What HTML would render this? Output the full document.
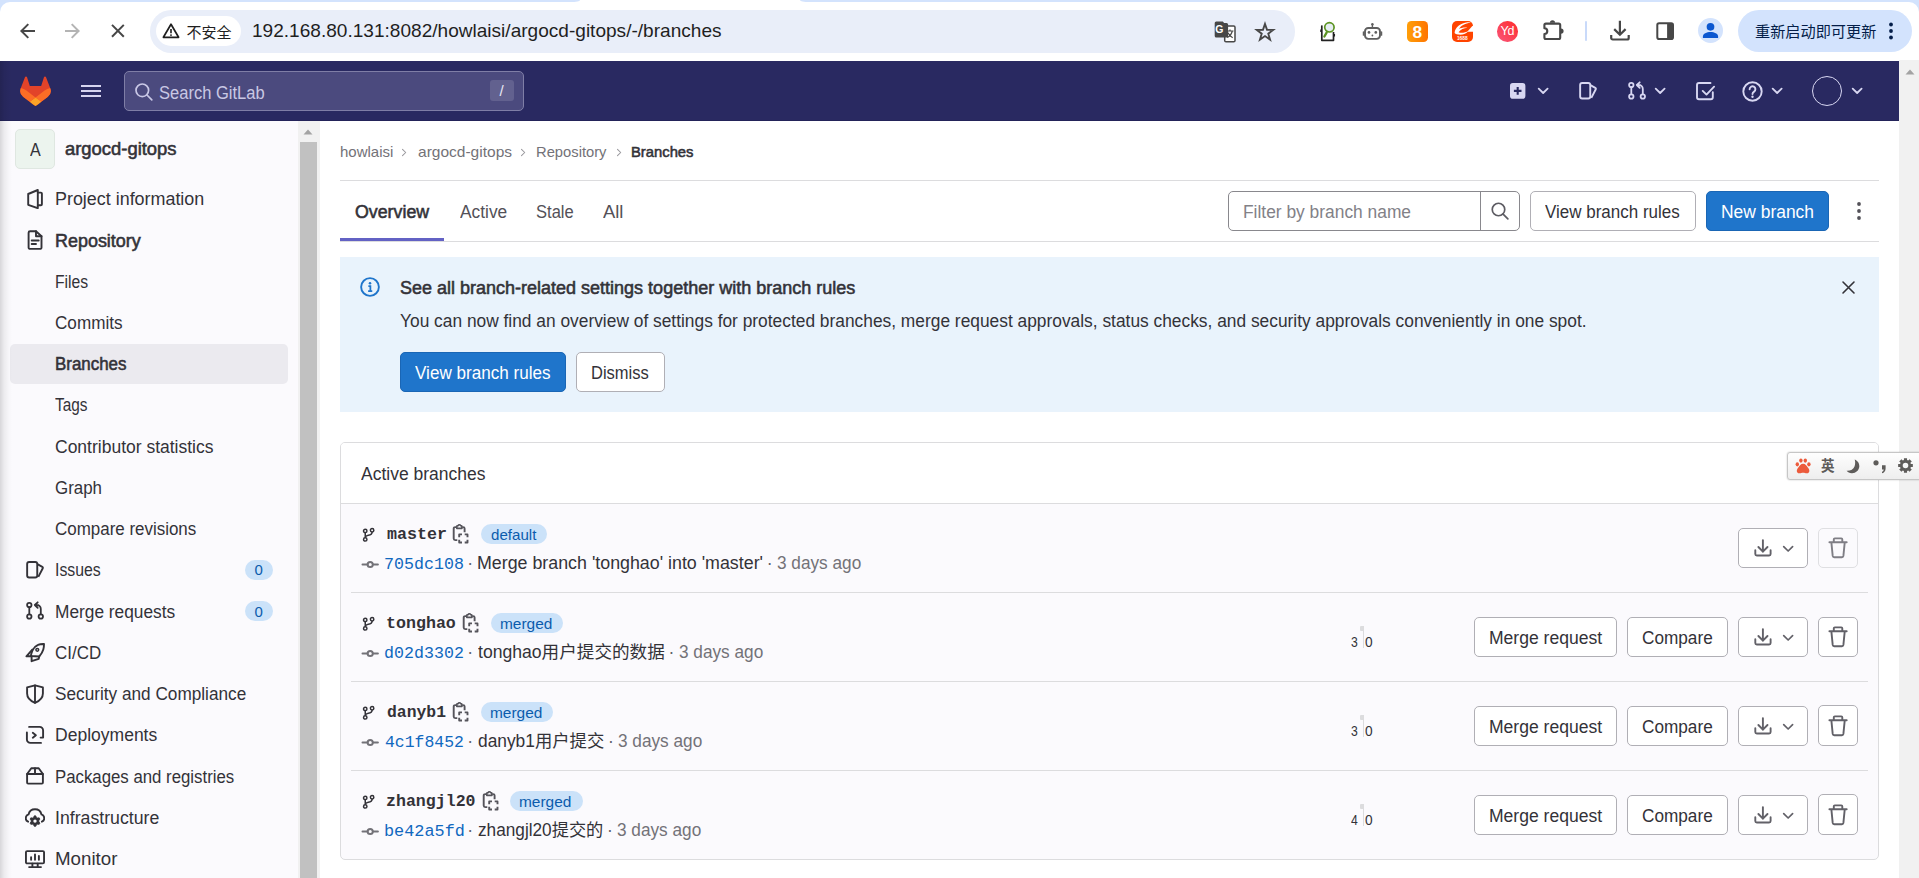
<!DOCTYPE html>
<html lang="en"><head><meta charset="utf-8"><title>Branches · howlaisi / argocd-gitops · GitLab</title>
<style>
html,body{margin:0;padding:0;}
body{width:1919px;height:878px;overflow:hidden;position:relative;background:#fff;font-family:'Liberation Sans','Noto Sans CJK SC',sans-serif;}
.b{position:absolute;box-sizing:border-box;display:block;}
.t{position:absolute;white-space:nowrap;line-height:24px;height:24px;transform-origin:0 50%;}
</style></head><body>
<header class="browser-toolbar">
<div class="b" style="left:0px;top:0px;width:1919px;height:61px;background:#d3e3fd;"></div>
<div class="b" style="left:0px;top:2px;width:1919px;height:59px;background:#fff;border-radius:10px 10px 0 0;"></div>
<div class="b" style="left:580px;top:0px;width:220px;height:6px;background:#fff;"></div>
<svg class="b" style="left:570px;top:0px;" width="10" height="2" viewBox="0 0 10 2"><path d="M0 2 Q10 2 10 0 L10 2 Z" fill="#fff"/></svg>
<svg class="b" style="left:800px;top:0px;" width="10" height="2" viewBox="0 0 10 2"><path d="M10 2 Q0 2 0 0 L0 2 Z" fill="#fff"/></svg>
<svg class="b" style="left:18px;top:20.5px;" width="20" height="20" viewBox="0 0 20 20"><path d="M17 10H3.500M10.300 3.100L3.400 10l6.900 6.900" fill="none" stroke="#474747" stroke-width="2"/></svg>
<svg class="b" style="left:62px;top:20.5px;" width="20" height="20" viewBox="0 0 20 20"><path d="M3 10h13.500M9.700 3.100L16.600 10l-6.900 6.900" fill="none" stroke="#b4b4b4" stroke-width="2"/></svg>
<svg class="b" style="left:107.5px;top:21px;" width="20" height="20" viewBox="0 0 20 20"><path d="M4 3.900l11.800 11.800M15.800 3.900L4 15.700" fill="none" stroke="#474747" stroke-width="2"/></svg>
<div class="b" style="left:150px;top:10px;width:1144.5px;height:42.5px;background:#e9eef9;border-radius:21.25px;"></div>
<div class="b" style="left:156px;top:16px;width:84.8px;height:30px;background:#fff;border-radius:15px;"></div>
<svg class="b" style="left:162px;top:22px;" width="18" height="17" viewBox="0 0 18 17"><path d="M9 2.200L16.600 15.300H1.400Z" fill="none" stroke="#1f1f1f" stroke-width="1.700" stroke-linejoin="round"/><path d="M9 7v4.200" stroke="#1f1f1f" stroke-width="1.600"/><circle cx="9" cy="13.100" r="0.950" fill="#1f1f1f"/></svg>
<span class="t" style="left:186.40px;top:20.60px;font-size:15px;color:#1f1f1f;transform:scaleX(1.0000);">不安全</span>
<span class="t" style="left:251.50px;top:19.30px;font-size:19px;color:#1f1f1f;transform:scaleX(1.0034);">192.168.80.131:8082/howlaisi/argocd-gitops/-/branches</span>
<svg class="b" style="left:1214px;top:21px;" width="22" height="22" viewBox="0 0 22 22"><path d="M2.300 0.500h6.500l1.300 1.500h2.400a1.600 1.600 0 0 1 1.600 1.600v11.300a1.600 1.600 0 0 1-1.600 1.600H2.300a1.600 1.600 0 0 1-1.600-1.600V2.100A1.600 1.600 0 0 1 2.300.500z" fill="#474747"/>
<rect x="10.700" y="5" width="10.300" height="15.700" rx="1.300" fill="#fff" stroke="#474747" stroke-width="1.500"/>
<path d="M10 5h4.100v11.500H10z" fill="#474747"/>
<text x="1.300" y="12.300" font-size="10.500" font-weight="700" fill="#fff" font-family="Liberation Sans,sans-serif">G</text>
<path d="M12.500 10h7M16 8.600V10M18.300 10c-.600 2.800-2.300 5-5 6.600M14 11.700c.800 2 2.400 3.800 4.700 5" fill="none" stroke="#474747" stroke-width="1.200"/></svg>
<svg class="b" style="left:1254px;top:20.5px;" width="22" height="22" viewBox="0 0 22 22"><path d="M11.00 3.00 L13.03 8.81 L19.18 8.94 L14.28 12.67 L16.05 18.56 L11.00 15.05 L5.95 18.56 L7.72 12.67 L2.82 8.94 L8.97 8.81Z" fill="none" stroke="#474747" stroke-width="1.900" stroke-linejoin="miter"/></svg>
<svg class="b" style="left:1319px;top:20px;" width="18" height="22" viewBox="0 0 18 22"><path d="M3.500 6H2.800v14.300H14.500V12" fill="none" stroke="#222" stroke-width="1.700" stroke-linejoin="round"/>
<path d="M1.800 9.500v2.500M15.500 14v2.500" stroke="#222" stroke-width="1.100"/>
<circle cx="10.400" cy="7.300" r="4.700" fill="#e6edf3" stroke="#5c9422" stroke-width="1.700"/>
<path d="M7.600 12.600L5.400 16.500" stroke="#5c9422" stroke-width="2.300" stroke-linecap="round"/></svg>
<svg class="b" style="left:1362px;top:22px;" width="21" height="19" viewBox="0 0 21 19"><rect x="3" y="6" width="15" height="10.900" rx="3.300" fill="none" stroke="#5f5f5f" stroke-width="1.900"/>
<path d="M1.400 10v3.200M19.600 10v3.200" stroke="#5f5f5f" stroke-width="1.300" stroke-linecap="round"/>
<path d="M10.400 5.500V2.500" stroke="#5f5f5f" stroke-width="1.400"/><circle cx="10.400" cy="2.200" r="1.250" fill="#5f5f5f"/>
<circle cx="7" cy="10.400" r="1.350" fill="#5f5f5f"/><circle cx="13.800" cy="10.400" r="1.350" fill="#5f5f5f"/><circle cx="10.400" cy="13.500" r=".900" fill="#5f5f5f"/></svg>
<div class="b" style="left:1407px;top:21px;width:20.700px;height:20.900px;border-radius:4.500px;background:linear-gradient(90deg,#ff9f0a,#ff7500);color:#fff;font:700 17.300px/22.600px 'Liberation Sans',sans-serif;text-align:center;">8</div>
<div class="b" style="left:1452.300px;top:21px;width:20.500px;height:20.500px;border-radius:5px;background:#ff4400;"></div>
<svg class="b" style="left:1452.3px;top:21px;" width="24" height="20.5" viewBox="0 0 24 20.5"><path d="M2.600 11.800C3 6.500 8.500 2 15.500 1.300c1.600-.100 2.600.200 3.300.800-4.500-.300-9.800 2.300-11.800 6 2-1.200 5.500-1.800 8.300-1.300-3.500.300-6.800 1.800-8.800 4.400 2.500 1.200 6.800.700 10-1.500-1.800 3-6.500 4.600-10.300 3.900-2.300-.400-3.700-1.200-3.600-1.800z" fill="#fff"/>
<path d="M15.300 10.800L20.300 5h.800v5.800z" fill="#fff"/>
<text x="10.250" y="18.700" font-size="4.800" font-weight="700" fill="#fff" text-anchor="middle" font-family="Liberation Sans,sans-serif">1688</text></svg>
<div class="b" style="left:1497px;top:21px;width:20.700px;height:20.700px;border-radius:50%;background:linear-gradient(225deg,#ff2a2a,#f9587c);color:#fff;font:400 12.500px/20.500px 'Liberation Sans',sans-serif;letter-spacing:-1.300px;text-align:center;text-indent:-1px;">Yd</div>
<svg class="b" style="left:1540px;top:19px;" width="26" height="23" viewBox="0 0 26 23"><path d="M5.900 4.600H18.700a1.500 1.500 0 0 1 1.500 1.500V18.500a1.500 1.500 0 0 1-1.500 1.500H5.900a1.500 1.500 0 0 1-1.500-1.500V15a2.900 2.900 0 0 0 0-5.800V6.100a1.500 1.500 0 0 1 1.500-1.500z" fill="none" stroke="#474747" stroke-width="2.100" stroke-linejoin="round"/>
<path d="M9.900 3.800a2.600 2.600 0 0 1 5.200 0zM21 9.500a2.600 2.600 0 0 1 0 5.200z" fill="#474747"/></svg>
<div class="b" style="left:1585px;top:21px;width:2.3px;height:19.5px;background:#c9dafa;border-radius:1px;"></div>
<svg class="b" style="left:1608px;top:19px;" width="24" height="23" viewBox="0 0 24 23"><path d="M11.900 1.700v13.500M6.200 10.100l5.700 5.700 5.700-5.700M3.200 16v3a1.500 1.500 0 0 0 1.500 1.500h14.500a1.500 1.500 0 0 0 1.500-1.500V16" fill="none" stroke="#474747" stroke-width="2.200"/></svg>
<svg class="b" style="left:1655px;top:21px;" width="20" height="20" viewBox="0 0 20 20"><rect x="2.300" y="2.200" width="15.700" height="15.900" rx="1.800" fill="none" stroke="#474747" stroke-width="2"/><path d="M12.100 2.200H17a1 1 0 0 1 1 1v14a1 1 0 0 1-1 1h-4.900z" fill="#474747"/></svg>
<div class="b" style="left:1698px;top:17.8px;width:25.3px;height:25.3px;background:#d3e3fd;border-radius:12.65px;"></div>
<svg class="b" style="left:1698px;top:17.8px;" width="25.3" height="25.3" viewBox="0 0 25.3 25.3"><circle cx="12.500" cy="8.800" r="3.850" fill="#0b57d0"/><path d="M4.900 19.900v-1.300c0-3.200 3.800-4.700 7.600-4.700s7.600 1.500 7.600 4.700v1.300z" fill="#0b57d0"/></svg>
<div class="b" style="left:1737.7px;top:10px;width:174.5px;height:42px;background:#d3e3fd;border-radius:21px;"></div>
<span class="t" style="left:1755.30px;top:20.00px;font-size:15px;color:#041e49;transform:scaleX(1.0108);">重新启动即可更新</span>
<svg class="b" style="left:1887.2px;top:21px;" width="8" height="20" viewBox="0 0 8 20"><circle cx="4" cy="3.500" r="1.900" fill="#041e49"/><circle cx="4" cy="10" r="1.900" fill="#041e49"/><circle cx="4" cy="16.500" r="1.900" fill="#041e49"/></svg>
</header>
<nav class="navbar-gitlab">
<div class="b" style="left:0px;top:60.75px;width:1899px;height:60px;background:#292961;"></div>
<div class="b" style="left:0px;top:119.9px;width:1899px;height:0.85px;background:#232359;"></div>
<div class="b" style="left:1899.4px;top:60.4px;width:20px;height:818px;background:#f1f1f1;"></div>
<svg class="b" style="left:1904.6px;top:69.4px;" width="10" height="6" viewBox="0 0 10 6"><path d="M5 0.500L9.500 5.500H0.500Z" fill="#a3a3a3"/></svg>
<svg class="b" style="left:20px;top:76px;" width="31" height="29.5" viewBox="0 0 32 31"><path d="M31.460 12.780l-.040-.120-4.350-11.350a1.140 1.140 0 0 0-.450-.540 1.170 1.170 0 0 0-1.340.070 1.170 1.170 0 0 0-.390.590l-2.940 9h-11.900l-2.940-9a1.140 1.140 0 0 0-.390-.590 1.170 1.170 0 0 0-1.340-.070 1.150 1.150 0 0 0-.450.540L.580 12.660l-.04.110a8.080 8.080 0 0 0 2.680 9.340l.01.010.04.030 6.630 4.960 3.280 2.480 2 1.510a1.340 1.340 0 0 0 1.620 0l2-1.510 3.280-2.480 6.670-5 .020-.010a8.090 8.090 0 0 0 2.690-9.320z" fill="#e24329"/>
<path d="M31.460 12.780l-.040-.120a14.700 14.700 0 0 0-5.850 2.630l-9.570 7.240 6.090 4.600 6.670-5 .020-.010a8.090 8.090 0 0 0 2.680-9.340z" fill="#fc6d26"/>
<path d="M9.900 27.130l3.280 2.480 2 1.510a1.340 1.340 0 0 0 1.620 0l2-1.510 3.280-2.480-6.080-4.600z" fill="#fca326"/>
<path d="M6.430 15.290a14.700 14.700 0 0 0-5.850-2.630l-.04.110a8.080 8.080 0 0 0 2.680 9.340l.01.010.04.030 6.630 4.960 6.100-4.580z" fill="#fc6d26"/></svg>
<div class="b" style="left:81px;top:84.6px;width:20px;height:2px;background:#d6d4ef;"></div>
<div class="b" style="left:81px;top:90.2px;width:20px;height:2px;background:#d6d4ef;"></div>
<div class="b" style="left:81px;top:95.3px;width:20px;height:2px;background:#d6d4ef;"></div>
<div class="b" style="left:124px;top:71px;width:399.5px;height:39.5px;background:#4b4a7e;border:1px solid #7f7ea6;border-radius:5px;"></div>
<svg class="b" style="left:134px;top:81.5px;" width="20" height="20" viewBox="0 0 20 20"><circle cx="8.300" cy="8.300" r="6.300" fill="none" stroke="#c9c8e6" stroke-width="1.700"/><path d="M13 13L17.800 17.800" stroke="#c9c8e6" stroke-width="1.700" stroke-linecap="round"/></svg>
<span class="t" style="left:159.00px;top:81.30px;font-size:17.5px;color:#c9c8e4;transform:scaleX(0.9448);">Search GitLab</span>
<div class="b" style="left:490px;top:80px;width:23.75px;height:20.75px;background:#62618f;border-radius:3px;"></div>
<span class="t" style="left:499.50px;top:78.50px;font-size:15px;color:#e8e7f5;">/</span>
<svg class="b" style="left:1510.3px;top:83.1px;" width="15.4" height="15.7" viewBox="0 0 15.4 15.7"><rect x="0" y="0" width="15.400" height="15.700" rx="2.800" fill="#d8d7f2"/><path d="M7.700 4v7.700M3.900 7.850h7.600" stroke="#292961" stroke-width="2.100"/></svg>
<svg class="b" style="left:1536.8px;top:87.1px;" width="12.3" height="8" viewBox="0 0 12.3 8"><path d="M1.700 1.700L6.150 6l4.450-4.300" fill="none" stroke="#d8d7f2" stroke-width="1.8" stroke-linecap="round" stroke-linejoin="round"/></svg>
<svg class="b" style="left:1577.8px;top:81px;" width="20" height="20" viewBox="0 0 20 20"><rect x="2.150" y="2.050" width="10.100" height="15.400" rx="2" fill="none" stroke="#d8d7f2" stroke-width="1.9"/><path d="M12.400 4.200L17.300 6.800a1.100 1.100 0 0 1 .500 1.400L13.300 16.900" fill="none" stroke="#d8d7f2" stroke-width="1.9" stroke-linejoin="round"/></svg>
<svg class="b" style="left:1627px;top:81.1px;" width="20" height="20" viewBox="0 0 20 20"><circle cx="4.300" cy="4" r="2.200" fill="none" stroke="#d8d7f2" stroke-width="1.8"/><circle cx="4.300" cy="15.500" r="2.200" fill="none" stroke="#d8d7f2" stroke-width="1.8"/><circle cx="15.800" cy="15.500" r="2.200" fill="none" stroke="#d8d7f2" stroke-width="1.8"/><path d="M4.300 6.200v7.100M15.800 13.300V8a4 4 0 0 0-4-4H10M12.700 1.300L9.800 4l2.900 2.900" fill="none" stroke="#d8d7f2" stroke-width="1.8" stroke-linejoin="round" stroke-linecap="round"/></svg>
<svg class="b" style="left:1653.5px;top:87.1px;" width="12.3" height="8" viewBox="0 0 12.3 8"><path d="M1.700 1.700L6.150 6l4.450-4.300" fill="none" stroke="#d8d7f2" stroke-width="1.8" stroke-linecap="round" stroke-linejoin="round"/></svg>
<svg class="b" style="left:1695px;top:81px;" width="21" height="20" viewBox="0 0 21 20"><path d="M17.800 11.300v5a2 2 0 0 1-2 2H4a2 2 0 0 1-2-2V4a2 2 0 0 1 2-2h11.500" fill="none" stroke="#d8d7f2" stroke-width="1.900" stroke-linecap="round"/><path d="M7.700 9.900l3.800 3.700 7.600-7.900" fill="none" stroke="#d8d7f2" stroke-width="1.900" stroke-linecap="round" stroke-linejoin="round"/></svg>
<svg class="b" style="left:1741.5px;top:80.5px;" width="21" height="21" viewBox="0 0 21 21"><circle cx="10.500" cy="10.500" r="9.200" fill="none" stroke="#d8d7f2" stroke-width="1.900"/><path d="M7.600 8.200a2.900 2.900 0 1 1 4.500 2.400c-1 .700-1.600 1.300-1.600 2.400" fill="none" stroke="#d8d7f2" stroke-width="1.900" stroke-linecap="round"/><circle cx="10.500" cy="15.700" r="1.200" fill="#d8d7f2"/></svg>
<svg class="b" style="left:1770.8px;top:87.3px;" width="12.3" height="8" viewBox="0 0 12.3 8"><path d="M1.700 1.700L6.150 6l4.450-4.300" fill="none" stroke="#d8d7f2" stroke-width="1.8" stroke-linecap="round" stroke-linejoin="round"/></svg>
<div class="b" style="left:1811.75px;top:75.75px;width:30.5px;height:30.5px;background:#292961;border:1px solid #d8d7f2;border-radius:15.25px;"></div>
<svg class="b" style="left:1850.7px;top:87.3px;" width="12.3" height="8" viewBox="0 0 12.3 8"><path d="M1.700 1.700L6.150 6l4.450-4.300" fill="none" stroke="#d8d7f2" stroke-width="1.8" stroke-linecap="round" stroke-linejoin="round"/></svg>
</nav>
<aside class="nav-sidebar">
<div class="b" style="left:0px;top:120.75px;width:299px;height:758px;background:#fbfafd;"></div>
<div class="b" style="left:0px;top:60.75px;width:12px;height:818px;background:linear-gradient(90deg,rgba(0,0,0,.14) 0,rgba(0,0,0,.06) 35%,rgba(0,0,0,.015) 75%,rgba(0,0,0,0) 100%);z-index:5;"></div>
<div class="b" style="left:298px;top:120.75px;width:22px;height:758px;background:#f1f1f1;"></div>
<div class="b" style="left:300px;top:142px;width:17px;height:740px;background:#c1c1c1;"></div>
<svg class="b" style="left:303.4px;top:128.8px;" width="10" height="6" viewBox="0 0 10 6"><path d="M5 0.500L9.500 5.500H0.500Z" fill="#a3a3a3"/></svg>
<div class="b" style="left:15px;top:129px;width:40px;height:40px;background:#ecf4ee;border:1px solid #dfe7e1;border-radius:5px;"></div>
<span class="t" style="left:29.50px;top:138.00px;font-size:17.5px;color:#333238;transform:scaleX(0.9167);">A</span>
<span class="t" style="left:65.30px;top:137.00px;font-size:17.5px;color:#333238;-webkit-text-stroke:0.55px;transform:scaleX(1.0519);">argocd-gitops</span>
<span class="t" style="left:55.00px;top:187.05px;font-size:17.5px;color:#333238;transform:scaleX(1.0231);">Project information</span>
<svg class="b" style="left:25px;top:188.75px;" width="20" height="20" viewBox="0 0 20 20"><path d="M12.800 1L3.200 5V15.800L12.800 19.200Z" fill="none" stroke="#333238" stroke-width="1.900" stroke-linejoin="round" stroke-linecap="round"/><path d="M12.800 3.600H15.900a1 1 0 0 1 1 1V15.300a1 1 0 0 1-1 1H12.800" fill="none" stroke="#333238" stroke-width="1.900" stroke-linejoin="round" stroke-linecap="round"/></svg>
<span class="t" style="left:55.00px;top:228.60px;font-size:17.5px;color:#333238;-webkit-text-stroke:0.55px;transform:scaleX(1.0254);">Repository</span>
<svg class="b" style="left:25px;top:230.0px;" width="20" height="20" viewBox="0 0 20 20"><path d="M11 1.200H5.100A1.500 1.500 0 0 0 3.600 2.700v14.700a1.500 1.500 0 0 0 1.500 1.500H15a1.500 1.500 0 0 0 1.500-1.500V6.200z" fill="none" stroke="#333238" stroke-width="1.900" stroke-linejoin="round" stroke-linecap="round"/><path d="M11 1.200v5h5.500" fill="none" stroke="#333238" stroke-width="1.900" stroke-linejoin="round" stroke-linecap="round"/><path d="M6.700 10.500h7M6.700 14h4.300" fill="none" stroke="#333238" stroke-width="1.900" stroke-linejoin="round" stroke-linecap="round"/></svg>
<span class="t" style="left:55.00px;top:269.55px;font-size:17.5px;color:#333238;transform:scaleX(0.8978);">Files</span>
<span class="t" style="left:55.00px;top:310.80px;font-size:17.5px;color:#333238;transform:scaleX(0.9780);">Commits</span>
<div class="b" style="left:10px;top:343.75px;width:277.5px;height:40px;background:#ebeaef;border-radius:5px;"></div>
<span class="t" style="left:55.00px;top:352.35px;font-size:17.5px;color:#333238;-webkit-text-stroke:0.55px;transform:scaleX(0.9668);">Branches</span>
<span class="t" style="left:55.00px;top:393.30px;font-size:17.5px;color:#333238;transform:scaleX(0.8800);">Tags</span>
<span class="t" style="left:55.00px;top:434.55px;font-size:17.5px;color:#333238;transform:scaleX(0.9998);">Contributor statistics</span>
<span class="t" style="left:55.00px;top:475.80px;font-size:17.5px;color:#333238;transform:scaleX(0.9655);">Graph</span>
<span class="t" style="left:55.00px;top:517.05px;font-size:17.5px;color:#333238;transform:scaleX(0.9683);">Compare revisions</span>
<span class="t" style="left:55.00px;top:558.30px;font-size:17.5px;color:#333238;transform:scaleX(0.9031);">Issues</span>
<svg class="b" style="left:25px;top:560.0px;" width="20" height="20" viewBox="0 0 20 20"><rect x="2.150" y="2.050" width="10.100" height="15.400" rx="2" fill="none" stroke="#333238" stroke-width="1.9"/><path d="M12.400 4.200L17.300 6.800a1.100 1.100 0 0 1 .500 1.400L13.300 16.900" fill="none" stroke="#333238" stroke-width="1.9" stroke-linejoin="round"/></svg>
<span class="t" style="left:55.00px;top:599.55px;font-size:17.5px;color:#333238;transform:scaleX(0.9889);">Merge requests</span>
<svg class="b" style="left:25px;top:601.25px;" width="20" height="20" viewBox="0 0 20 20"><circle cx="4.300" cy="4" r="2.200" fill="none" stroke="#333238" stroke-width="1.8"/><circle cx="4.300" cy="15.500" r="2.200" fill="none" stroke="#333238" stroke-width="1.8"/><circle cx="15.800" cy="15.500" r="2.200" fill="none" stroke="#333238" stroke-width="1.8"/><path d="M4.300 6.200v7.100M15.800 13.300V8a4 4 0 0 0-4-4H10M12.700 1.300L9.800 4l2.900 2.900" fill="none" stroke="#333238" stroke-width="1.8" stroke-linejoin="round" stroke-linecap="round"/></svg>
<div class="b" style="left:244.5px;top:560.0px;width:28px;height:20px;background:#cbe2f9;border-radius:10px;"></div>
<span class="t" style="left:254.60px;top:558.30px;font-size:15px;color:#0b5cad;">0</span>
<div class="b" style="left:244.5px;top:601.25px;width:28px;height:20px;background:#cbe2f9;border-radius:10px;"></div>
<span class="t" style="left:254.60px;top:599.55px;font-size:15px;color:#0b5cad;">0</span>
<span class="t" style="left:55.00px;top:640.80px;font-size:17.5px;color:#333238;transform:scaleX(0.9681);">CI/CD</span>
<svg class="b" style="left:25px;top:642.5px;" width="20" height="20" viewBox="0 0 20 20"><path d="M19 1C16.500.900 14.500 1.200 13 1.900 10.500 3 8.500 5 7.400 7.500 6.600 9.300 6.100 11.300 5.900 13L14.200 13.500C16 11.500 17.500 9.300 18.300 6.500 18.800 4.800 19 3 19 1Z" fill="none" stroke="#333238" stroke-width="1.900" stroke-linejoin="round" stroke-linecap="round"/><circle cx="12.300" cy="6.800" r="1.400" fill="none" stroke="#333238" stroke-width="1.500"/><path d="M7.300 6.600L1.400 13.300H5.800" fill="none" stroke="#333238" stroke-width="1.900" stroke-linejoin="round" stroke-linecap="round"/><path d="M6.600 13.300V18.200L13.700 15.800 14.200 13.500" fill="none" stroke="#333238" stroke-width="1.900" stroke-linejoin="round" stroke-linecap="round"/></svg>
<span class="t" style="left:55.00px;top:682.05px;font-size:17.5px;color:#333238;transform:scaleX(0.9829);">Security and Compliance</span>
<svg class="b" style="left:25px;top:683.75px;" width="20" height="20" viewBox="0 0 20 20"><path d="M10 1.300L17.900 3.400V9.500C17.900 14 14.500 17 10 18.900 5.500 17 2.100 14 2.100 9.500V3.400Z" fill="none" stroke="#333238" stroke-width="1.900" stroke-linejoin="round" stroke-linecap="round"/><path d="M10 1.500V18.700" fill="none" stroke="#333238" stroke-width="1.900" stroke-linejoin="round" stroke-linecap="round"/></svg>
<span class="t" style="left:55.00px;top:723.30px;font-size:17.5px;color:#333238;transform:scaleX(1.0012);">Deployments</span>
<svg class="b" style="left:25px;top:725.0px;" width="20" height="20" viewBox="0 0 20 20"><path d="M4.100 1.900H14.600a3.500 3.500 0 0 1 3.500 3.500v7.200H15.600" fill="none" stroke="#333238" stroke-width="1.900" stroke-linejoin="round" stroke-linecap="round"/><path d="M1.900 7.400v7a3.500 3.500 0 0 0 3.500 3.500H16" fill="none" stroke="#333238" stroke-width="1.900" stroke-linejoin="round" stroke-linecap="round"/><path d="M7.800 7.800L10.900 10.200 7.800 12.700" fill="none" stroke="#333238" stroke-width="1.900" stroke-linejoin="round" stroke-linecap="round"/></svg>
<span class="t" style="left:55.00px;top:764.55px;font-size:17.5px;color:#333238;transform:scaleX(0.9596);">Packages and registries</span>
<svg class="b" style="left:25px;top:766.25px;" width="20" height="20" viewBox="0 0 20 20"><path d="M2.100 8L6.300 2.300H13.700L17.900 8V16.600a1 1 0 0 1-1 1H3.100a1 1 0 0 1-1-1Z" fill="none" stroke="#333238" stroke-width="1.900" stroke-linejoin="round" stroke-linecap="round"/><path d="M2.100 8H17.900M10 2.300V8" fill="none" stroke="#333238" stroke-width="1.900" stroke-linejoin="round" stroke-linecap="round"/></svg>
<span class="t" style="left:55.00px;top:805.80px;font-size:17.5px;color:#333238;transform:scaleX(1.0112);">Infrastructure</span>
<svg class="b" style="left:25px;top:807.5px;" width="20" height="20" viewBox="0 0 20 20"><path d="M3.100 13.700A3.900 3.900 0 0 1 3.500 6.400a6.700 6.700 0 0 1 13 0 3.900 3.900 0 0 1 .400 7.300" fill="none" stroke="#333238" stroke-width="1.900" stroke-linejoin="round" stroke-linecap="round"/><path d="M9.31 7.85 L10.69 7.85 L11.49 9.50 L12.37 10.01 L14.20 9.87 L14.90 11.07 L13.87 12.59 L13.87 13.61 L14.90 15.13 L14.20 16.33 L12.37 16.19 L11.49 16.70 L10.69 18.35 L9.31 18.35 L8.51 16.70 L7.63 16.19 L5.80 16.33 L5.10 15.13 L6.13 13.61 L6.13 12.59 L5.10 11.07 L5.80 9.87 L7.63 10.01 L8.51 9.50Z" fill="#333238" stroke="#333238" stroke-width=".800" stroke-linejoin="round"/><circle cx="10" cy="13.100" r="1.700" fill="#fbfafd"/></svg>
<span class="t" style="left:55.00px;top:847.05px;font-size:17.5px;color:#333238;transform:scaleX(1.0691);">Monitor</span>
<svg class="b" style="left:25px;top:848.75px;" width="20" height="20" viewBox="0 0 20 20"><rect x=".950" y="2.100" width="18.100" height="12.300" rx="1.200" fill="none" stroke="#333238" stroke-width="1.900" stroke-linejoin="round" stroke-linecap="round"/><path d="M4.100 18.100h11.900M7.400 14.700v3.200M12.700 14.700v3.200" fill="none" stroke="#333238" stroke-width="1.900" stroke-linejoin="round" stroke-linecap="round"/><path d="M6.100 10.800V8.200M10 10.800V5.500M13.900 10.800V6.900" fill="none" stroke="#333238" stroke-width="1.900" stroke-linejoin="round" stroke-linecap="round"/></svg>
</aside>
<main class="content">
<span class="t" style="left:339.60px;top:139.50px;font-size:15px;color:#737278;transform:scaleX(0.9995);">howlaisi</span>
<svg class="b" style="left:400.7px;top:147.5px;" width="7" height="9" viewBox="0 0 7 9"><path d="M1.500 1.300L4.700 4.500 1.500 7.700" fill="none" stroke="#99989d" stroke-width="1.050" stroke-linecap="round" stroke-linejoin="round"/></svg>
<span class="t" style="left:418.00px;top:139.50px;font-size:15px;color:#737278;transform:scaleX(1.0344);">argocd-gitops</span>
<svg class="b" style="left:520px;top:147.5px;" width="7" height="9" viewBox="0 0 7 9"><path d="M1.500 1.300L4.700 4.500 1.500 7.700" fill="none" stroke="#99989d" stroke-width="1.050" stroke-linecap="round" stroke-linejoin="round"/></svg>
<span class="t" style="left:536.02px;top:139.50px;font-size:15px;color:#737278;transform:scaleX(0.9832);">Repository</span>
<svg class="b" style="left:615.5px;top:147.5px;" width="7" height="9" viewBox="0 0 7 9"><path d="M1.500 1.300L4.700 4.500 1.500 7.700" fill="none" stroke="#99989d" stroke-width="1.050" stroke-linecap="round" stroke-linejoin="round"/></svg>
<span class="t" style="left:631.31px;top:139.50px;font-size:15px;color:#333238;-webkit-text-stroke:0.55px;transform:scaleX(0.9860);">Branches</span>
<div class="b" style="left:340px;top:180px;width:1539px;height:1px;background:#dcdcde;"></div>
<span class="t" style="left:355.00px;top:200.00px;font-size:17.5px;color:#333238;-webkit-text-stroke:0.55px;transform:scaleX(1.0165);">Overview</span>
<span class="t" style="left:459.50px;top:200.00px;font-size:17.5px;color:#535158;transform:scaleX(0.9910);">Active</span>
<span class="t" style="left:536.00px;top:200.00px;font-size:17.5px;color:#535158;transform:scaleX(0.9450);">Stale</span>
<span class="t" style="left:603.00px;top:200.00px;font-size:17.5px;color:#535158;transform:scaleX(1.0506);">All</span>
<div class="b" style="left:340px;top:241px;width:1539px;height:1px;background:#dcdcde;"></div>
<div class="b" style="left:340px;top:238.2px;width:103.75px;height:2.8px;background:#6362c4;"></div>
<div class="b" style="left:1228px;top:191px;width:291.5px;height:40px;background:#fff;border:1px solid #89888d;border-radius:5px;"></div>
<div class="b" style="left:1479.5px;top:191px;width:1px;height:40px;background:#89888d;"></div>
<span class="t" style="left:1243.01px;top:199.50px;font-size:17.5px;color:#828187;transform:scaleX(0.9928);">Filter by branch name</span>
<svg class="b" style="left:1490px;top:201px;" width="20" height="20" viewBox="0 0 16 16"><circle cx="6.800" cy="6.800" r="5" fill="none" stroke="#5c5b62" stroke-width="1.350"/><path d="M10.500 10.500L14.300 14.300" stroke="#5c5b62" stroke-width="1.350" stroke-linecap="round"/></svg>
<div class="b" style="left:1529.5px;top:191px;width:166.3px;height:40px;background:#fff;border:1px solid #b0afb5;border-radius:5px;"></div>
<span class="t" style="left:1545.25px;top:199.80px;font-size:17.5px;color:#333238;transform:scaleX(0.9710);">View branch rules</span>
<div class="b" style="left:1706px;top:191px;width:123.2px;height:40px;background:#1f75cb;border:1px solid #1a66b5;border-radius:5px;"></div>
<span class="t" style="left:1720.50px;top:199.80px;font-size:17.5px;color:#fff;transform:scaleX(0.9957);">New branch</span>
<svg class="b" style="left:1854.5px;top:201px;" width="8" height="20" viewBox="0 0 8 20"><circle cx="4" cy="3" r="1.900" fill="#535158"/><circle cx="4" cy="10" r="1.900" fill="#535158"/><circle cx="4" cy="17" r="1.900" fill="#535158"/></svg>
<div class="b" style="left:340px;top:257px;width:1539px;height:154.5px;background:#e9f3fc;"></div>
<svg class="b" style="left:360px;top:277px;" width="20" height="20" viewBox="0 0 16 16"><circle cx="8" cy="8" r="7.100" fill="none" stroke="#1f75cb" stroke-width="1.500"/><circle cx="8" cy="4.900" r="1" fill="#1f75cb"/><path d="M6.700 7.300H8.300V11M6.500 11.200h3.300" fill="none" stroke="#1f75cb" stroke-width="1.400"/></svg>
<span class="t" style="left:400.00px;top:275.50px;font-size:17.5px;color:#333238;-webkit-text-stroke:0.55px;transform:scaleX(1.0285);">See all branch-related settings together with branch rules</span>
<span class="t" style="left:400.00px;top:308.50px;font-size:17.5px;color:#333238;transform:scaleX(0.9914);">You can now find an overview of settings for protected branches, merge request approvals, status checks, and security approvals conveniently in one spot.</span>
<div class="b" style="left:400px;top:352px;width:165.5px;height:40px;background:#1f75cb;border:1px solid #1a66b5;border-radius:5px;"></div>
<span class="t" style="left:415.00px;top:360.80px;font-size:17.5px;color:#fff;transform:scaleX(0.9764);">View branch rules</span>
<div class="b" style="left:575.5px;top:352px;width:89.2px;height:40px;background:#fff;border:1px solid #b0afb5;border-radius:5px;"></div>
<span class="t" style="left:590.81px;top:360.80px;font-size:17.5px;color:#333238;transform:scaleX(0.9423);">Dismiss</span>
<svg class="b" style="left:1841px;top:279.5px;" width="15" height="15" viewBox="0 0 15 15"><path d="M2 2l11 11M13 2L2 13" stroke="#333238" stroke-width="1.600" stroke-linecap="round"/></svg>
<div class="b" style="left:340px;top:442px;width:1539px;height:418px;background:#fbfafd;border:1px solid #dcdcde;border-radius:5px;"></div>
<div class="b" style="left:341px;top:443px;width:1537px;height:60px;background:#fff;border-radius:4px 4px 0 0;"></div>
<div class="b" style="left:341px;top:503px;width:1537px;height:1px;background:#dcdcde;"></div>
<span class="t" style="left:361.20px;top:461.80px;font-size:17.5px;color:#333238;transform:scaleX(0.9999);">Active branches</span>
<svg class="b" style="left:361px;top:526.5px;" width="15" height="16" viewBox="0 0 15 16"><circle cx="4.250" cy="3.900" r="1.700" fill="none" stroke="#333238" stroke-width="1.500"/><circle cx="4.250" cy="12.400" r="1.700" fill="none" stroke="#333238" stroke-width="1.500"/><circle cx="11.100" cy="3.200" r="1.700" fill="none" stroke="#333238" stroke-width="1.500"/><path d="M4.250 5.600v5.100M11.100 4.900c0 2.300-1.700 3-3.800 3.400-1.600.300-2.700.900-3 2" fill="none" stroke="#333238" stroke-width="1.500"/></svg>
<span class="t" style="left:386.50px;top:523.40px;font-size:17px;color:#333238;font-weight:700;font-family:'Liberation Mono','Noto Sans CJK SC',monospace;transform:scaleX(0.9799);">master</span>
<svg class="b" style="left:452.40000000000003px;top:522.9px;" width="17" height="21" viewBox="0 0 17 21"><path d="M4.300 4.100H3.200A1.500 1.500 0 0 0 1.700 5.600v10a1.500 1.500 0 0 0 1.500 1.500H5.300" fill="none" stroke="#55545b" stroke-width="1.900"/><path d="M10.300 4.100h.800a1.500 1.500 0 0 1 1.500 1.500v3.700" fill="none" stroke="#55545b" stroke-width="1.900"/><path d="M4.800 5.300V3.600a1 1 0 0 1 1-1h.400a1.200 1.200 0 0 1 2.300 0h.400a1 1 0 0 1 1 1v1.700z" fill="none" stroke="#55545b" stroke-width="1.700" stroke-linejoin="round"/><path d="M7.200 14.200V11.400H10M12.700 11.400h2.800v2.800M15.500 16.700v2.800h-2.800M10 19.500H7.200v-2.800" fill="none" stroke="#55545b" stroke-width="1.900" stroke-linejoin="round"/></svg>
<div class="b" style="left:480.70000000000005px;top:523.75px;width:66.3px;height:20px;background:#cbe2f9;border-radius:10px;"></div>
<span class="t" style="left:490.70px;top:523.10px;font-size:15px;color:#0b5cad;transform:scaleX(1.0083);">default</span>
<svg class="b" style="left:360.5px;top:556px;" width="18" height="16" viewBox="0 0 18 16"><circle cx="9.200" cy="8.500" r="2.600" fill="none" stroke="#737278" stroke-width="2"/><path d="M1.500 8.500h5M11.900 8.500h5" stroke="#737278" stroke-width="2" stroke-linecap="round"/></svg>
<span class="t" style="left:383.54px;top:552.50px;font-size:17.4px;color:#1068bf;font-family:'Liberation Mono','Noto Sans CJK SC',monospace;transform:scaleX(0.9567);">705dc108</span>
<span class="t" style="left:467.30px;top:551.00px;font-size:17.5px;color:#626168;">·</span>
<span class="t" style="left:477.18px;top:551.00px;font-size:17.5px;color:#333238;transform:scaleX(1.0181);">Merge branch &#x27;tonghao&#x27; into &#x27;master&#x27;</span>
<span class="t" style="left:766.80px;top:551.00px;font-size:17.5px;color:#626168;">·</span>
<span class="t" style="left:777.00px;top:551.00px;font-size:17.5px;color:#737278;transform:scaleX(0.9837);">3 days ago</span>
<div class="b" style="left:1738px;top:528px;width:69.75px;height:40px;background:#fff;border:1px solid #b0afb5;border-radius:5px;"></div>
<svg class="b" style="left:1752px;top:537px;" width="22" height="22" viewBox="0 0 22 22"><path d="M10.900 3.100v11.600M6.400 10l4.500 4.700 4.600-4.700M3.300 13.300v3.700a1.500 1.500 0 0 0 1.500 1.500h12.300a1.500 1.500 0 0 0 1.500-1.500v-3.700" fill="none" stroke="#626168" stroke-width="1.900" stroke-linecap="round" stroke-linejoin="round"/></svg>
<svg class="b" style="left:1782.1px;top:544.6px;" width="12.3" height="8" viewBox="0 0 12.3 8"><path d="M1.700 1.700L6.150 6l4.450-4.300" fill="none" stroke="#626168" stroke-width="1.7" stroke-linecap="round" stroke-linejoin="round"/></svg>
<div class="b" style="left:1818.2px;top:528px;width:39.4px;height:40px;background:#fbfafd;border:1px solid #dfdfe2;border-radius:5px;"></div>
<svg class="b" style="left:1827.7px;top:537px;" width="21" height="22" viewBox="0 0 21 22"><path d="M1.400 5.300h17.300M5.800 5V2.400a1 1 0 0 1 1-1h6.500a1 1 0 0 1 1 1V5M3.400 5.600l1.300 13.300a1.500 1.500 0 0 0 1.500 1.300h7.700a1.500 1.500 0 0 0 1.500-1.300l1.300-13.300" fill="none" stroke="#7f7e85" stroke-width="1.900" stroke-linecap="round" stroke-linejoin="round"/></svg>
<div class="b" style="left:351px;top:592px;width:1517px;height:1px;background:#dcdcde;"></div>
<svg class="b" style="left:361px;top:615.5px;" width="15" height="16" viewBox="0 0 15 16"><circle cx="4.250" cy="3.900" r="1.700" fill="none" stroke="#333238" stroke-width="1.500"/><circle cx="4.250" cy="12.400" r="1.700" fill="none" stroke="#333238" stroke-width="1.500"/><circle cx="11.100" cy="3.200" r="1.700" fill="none" stroke="#333238" stroke-width="1.500"/><path d="M4.250 5.600v5.100M11.100 4.900c0 2.300-1.700 3-3.800 3.400-1.600.300-2.700.900-3 2" fill="none" stroke="#333238" stroke-width="1.500"/></svg>
<span class="t" style="left:385.52px;top:612.40px;font-size:17px;color:#333238;font-weight:700;font-family:'Liberation Mono','Noto Sans CJK SC',monospace;transform:scaleX(0.9778);">tonghao</span>
<svg class="b" style="left:462.25px;top:611.9px;" width="17" height="21" viewBox="0 0 17 21"><path d="M4.300 4.100H3.200A1.500 1.500 0 0 0 1.700 5.600v10a1.500 1.500 0 0 0 1.500 1.500H5.300" fill="none" stroke="#55545b" stroke-width="1.900"/><path d="M10.300 4.100h.800a1.500 1.500 0 0 1 1.500 1.500v3.700" fill="none" stroke="#55545b" stroke-width="1.900"/><path d="M4.800 5.300V3.600a1 1 0 0 1 1-1h.400a1.200 1.200 0 0 1 2.300 0h.400a1 1 0 0 1 1 1v1.700z" fill="none" stroke="#55545b" stroke-width="1.700" stroke-linejoin="round"/><path d="M7.200 14.200V11.400H10M12.700 11.400h2.800v2.800M15.500 16.700v2.800h-2.800M10 19.500H7.200v-2.800" fill="none" stroke="#55545b" stroke-width="1.900" stroke-linejoin="round"/></svg>
<div class="b" style="left:490.55px;top:612.75px;width:72.3px;height:20px;background:#cbe2f9;border-radius:10px;"></div>
<span class="t" style="left:499.52px;top:612.10px;font-size:15px;color:#0b5cad;transform:scaleX(1.0299);">merged</span>
<svg class="b" style="left:360.5px;top:645px;" width="18" height="16" viewBox="0 0 18 16"><circle cx="9.200" cy="8.500" r="2.600" fill="none" stroke="#737278" stroke-width="2"/><path d="M1.500 8.500h5M11.900 8.500h5" stroke="#737278" stroke-width="2" stroke-linecap="round"/></svg>
<span class="t" style="left:383.54px;top:641.50px;font-size:17.4px;color:#1068bf;font-family:'Liberation Mono','Noto Sans CJK SC',monospace;transform:scaleX(0.9567);">d02d3302</span>
<span class="t" style="left:467.30px;top:640.00px;font-size:17.5px;color:#626168;">·</span>
<span class="t" style="left:478.20px;top:640.00px;font-size:17.5px;color:#333238;transform:scaleX(1.0056);">tonghao用户提交的数据</span>
<span class="t" style="left:668.50px;top:640.00px;font-size:17.5px;color:#626168;">·</span>
<span class="t" style="left:678.70px;top:640.00px;font-size:17.5px;color:#737278;transform:scaleX(0.9837);">3 days ago</span>
<div class="b" style="left:1738px;top:617px;width:69.75px;height:40px;background:#fff;border:1px solid #b0afb5;border-radius:5px;"></div>
<svg class="b" style="left:1752px;top:626px;" width="22" height="22" viewBox="0 0 22 22"><path d="M10.900 3.100v11.600M6.400 10l4.500 4.700 4.600-4.700M3.300 13.300v3.700a1.500 1.500 0 0 0 1.500 1.500h12.300a1.500 1.500 0 0 0 1.500-1.500v-3.700" fill="none" stroke="#626168" stroke-width="1.900" stroke-linecap="round" stroke-linejoin="round"/></svg>
<svg class="b" style="left:1782.1px;top:633.6px;" width="12.3" height="8" viewBox="0 0 12.3 8"><path d="M1.700 1.700L6.150 6l4.450-4.300" fill="none" stroke="#626168" stroke-width="1.7" stroke-linecap="round" stroke-linejoin="round"/></svg>
<div class="b" style="left:1818.2px;top:617px;width:39.4px;height:40px;background:#fff;border:1px solid #b0afb5;border-radius:5px;"></div>
<svg class="b" style="left:1827.7px;top:626px;" width="21" height="22" viewBox="0 0 21 22"><path d="M1.400 5.300h17.300M5.800 5V2.400a1 1 0 0 1 1-1h6.500a1 1 0 0 1 1 1V5M3.400 5.600l1.300 13.300a1.500 1.500 0 0 0 1.500 1.300h7.700a1.500 1.500 0 0 0 1.500-1.300l1.300-13.300" fill="none" stroke="#626168" stroke-width="1.900" stroke-linecap="round" stroke-linejoin="round"/></svg>
<div class="b" style="left:1474px;top:617px;width:142.7px;height:40px;background:#fff;border:1px solid #b0afb5;border-radius:5px;"></div>
<span class="t" style="left:1488.75px;top:625.80px;font-size:17.5px;color:#333238;transform:scaleX(1.0025);">Merge request</span>
<div class="b" style="left:1627px;top:617px;width:101px;height:40px;background:#fff;border:1px solid #b0afb5;border-radius:5px;"></div>
<span class="t" style="left:1642.25px;top:625.80px;font-size:17.5px;color:#333238;transform:scaleX(0.9826);">Compare</span>
<span class="t" style="left:1350.70px;top:630.30px;font-size:15px;color:#333238;transform:scaleX(0.8125);">3</span>
<span class="t" style="left:1364.80px;top:630.30px;font-size:15px;color:#333238;transform:scaleX(0.9125);">0</span>
<div class="b" style="left:1363px;top:626.4px;width:1px;height:21.5px;background:#dcdcde;"></div>
<div class="b" style="left:1360px;top:626px;width:4px;height:4.5px;background:#dcdcde;border-radius:1px;"></div>
<div class="b" style="left:351px;top:681px;width:1517px;height:1px;background:#dcdcde;"></div>
<svg class="b" style="left:361px;top:704.5px;" width="15" height="16" viewBox="0 0 15 16"><circle cx="4.250" cy="3.900" r="1.700" fill="none" stroke="#333238" stroke-width="1.500"/><circle cx="4.250" cy="12.400" r="1.700" fill="none" stroke="#333238" stroke-width="1.500"/><circle cx="11.100" cy="3.200" r="1.700" fill="none" stroke="#333238" stroke-width="1.500"/><path d="M4.250 5.600v5.100M11.100 4.900c0 2.300-1.700 3-3.800 3.400-1.600.300-2.700.900-3 2" fill="none" stroke="#333238" stroke-width="1.500"/></svg>
<span class="t" style="left:386.50px;top:701.40px;font-size:17px;color:#333238;font-weight:700;font-family:'Liberation Mono','Noto Sans CJK SC',monospace;transform:scaleX(0.9638);">danyb1</span>
<svg class="b" style="left:452.40000000000003px;top:700.9px;" width="17" height="21" viewBox="0 0 17 21"><path d="M4.300 4.100H3.200A1.500 1.500 0 0 0 1.700 5.600v10a1.500 1.500 0 0 0 1.500 1.500H5.300" fill="none" stroke="#55545b" stroke-width="1.900"/><path d="M10.300 4.100h.800a1.500 1.500 0 0 1 1.500 1.500v3.700" fill="none" stroke="#55545b" stroke-width="1.900"/><path d="M4.800 5.300V3.600a1 1 0 0 1 1-1h.400a1.200 1.200 0 0 1 2.300 0h.400a1 1 0 0 1 1 1v1.700z" fill="none" stroke="#55545b" stroke-width="1.700" stroke-linejoin="round"/><path d="M7.200 14.200V11.400H10M12.700 11.400h2.800v2.800M15.500 16.700v2.800h-2.800M10 19.500H7.200v-2.800" fill="none" stroke="#55545b" stroke-width="1.900" stroke-linejoin="round"/></svg>
<div class="b" style="left:480.70000000000005px;top:701.75px;width:72.3px;height:20px;background:#cbe2f9;border-radius:10px;"></div>
<span class="t" style="left:489.67px;top:701.10px;font-size:15px;color:#0b5cad;transform:scaleX(1.0299);">merged</span>
<svg class="b" style="left:360.5px;top:734px;" width="18" height="16" viewBox="0 0 18 16"><circle cx="9.200" cy="8.500" r="2.600" fill="none" stroke="#737278" stroke-width="2"/><path d="M1.500 8.500h5M11.900 8.500h5" stroke="#737278" stroke-width="2" stroke-linecap="round"/></svg>
<span class="t" style="left:384.50px;top:730.50px;font-size:17.4px;color:#1068bf;font-family:'Liberation Mono','Noto Sans CJK SC',monospace;transform:scaleX(0.9452);">4c1f8452</span>
<span class="t" style="left:467.30px;top:729.00px;font-size:17.5px;color:#626168;">·</span>
<span class="t" style="left:478.20px;top:729.00px;font-size:17.5px;color:#333238;transform:scaleX(0.9912);">danyb1用户提交</span>
<span class="t" style="left:608.00px;top:729.00px;font-size:17.5px;color:#626168;">·</span>
<span class="t" style="left:618.20px;top:729.00px;font-size:17.5px;color:#737278;transform:scaleX(0.9837);">3 days ago</span>
<div class="b" style="left:1738px;top:706px;width:69.75px;height:40px;background:#fff;border:1px solid #b0afb5;border-radius:5px;"></div>
<svg class="b" style="left:1752px;top:715px;" width="22" height="22" viewBox="0 0 22 22"><path d="M10.900 3.100v11.600M6.400 10l4.500 4.700 4.600-4.700M3.300 13.300v3.700a1.500 1.500 0 0 0 1.500 1.500h12.300a1.500 1.500 0 0 0 1.500-1.500v-3.700" fill="none" stroke="#626168" stroke-width="1.900" stroke-linecap="round" stroke-linejoin="round"/></svg>
<svg class="b" style="left:1782.1px;top:722.6px;" width="12.3" height="8" viewBox="0 0 12.3 8"><path d="M1.700 1.700L6.150 6l4.450-4.300" fill="none" stroke="#626168" stroke-width="1.7" stroke-linecap="round" stroke-linejoin="round"/></svg>
<div class="b" style="left:1818.2px;top:705px;width:39.4px;height:41px;background:#fff;border:1px solid #b0afb5;border-radius:5px;"></div>
<svg class="b" style="left:1827.7px;top:715px;" width="21" height="22" viewBox="0 0 21 22"><path d="M1.400 5.300h17.300M5.800 5V2.400a1 1 0 0 1 1-1h6.500a1 1 0 0 1 1 1V5M3.400 5.600l1.300 13.300a1.500 1.500 0 0 0 1.500 1.300h7.700a1.500 1.500 0 0 0 1.500-1.300l1.300-13.300" fill="none" stroke="#626168" stroke-width="1.900" stroke-linecap="round" stroke-linejoin="round"/></svg>
<div class="b" style="left:1474px;top:706px;width:142.7px;height:40px;background:#fff;border:1px solid #b0afb5;border-radius:5px;"></div>
<span class="t" style="left:1488.75px;top:714.80px;font-size:17.5px;color:#333238;transform:scaleX(1.0025);">Merge request</span>
<div class="b" style="left:1627px;top:706px;width:101px;height:40px;background:#fff;border:1px solid #b0afb5;border-radius:5px;"></div>
<span class="t" style="left:1642.25px;top:714.80px;font-size:17.5px;color:#333238;transform:scaleX(0.9826);">Compare</span>
<span class="t" style="left:1350.70px;top:719.30px;font-size:15px;color:#333238;transform:scaleX(0.8125);">3</span>
<span class="t" style="left:1364.80px;top:719.30px;font-size:15px;color:#333238;transform:scaleX(0.9125);">0</span>
<div class="b" style="left:1363px;top:715.4px;width:1px;height:21.5px;background:#dcdcde;"></div>
<div class="b" style="left:1360px;top:715px;width:4px;height:4.5px;background:#dcdcde;border-radius:1px;"></div>
<div class="b" style="left:351px;top:770px;width:1517px;height:1px;background:#dcdcde;"></div>
<svg class="b" style="left:361px;top:793.5px;" width="15" height="16" viewBox="0 0 15 16"><circle cx="4.250" cy="3.900" r="1.700" fill="none" stroke="#333238" stroke-width="1.500"/><circle cx="4.250" cy="12.400" r="1.700" fill="none" stroke="#333238" stroke-width="1.500"/><circle cx="11.100" cy="3.200" r="1.700" fill="none" stroke="#333238" stroke-width="1.500"/><path d="M4.250 5.600v5.100M11.100 4.900c0 2.300-1.700 3-3.800 3.400-1.600.300-2.700.900-3 2" fill="none" stroke="#333238" stroke-width="1.500"/></svg>
<span class="t" style="left:385.52px;top:790.40px;font-size:17px;color:#333238;font-weight:700;font-family:'Liberation Mono','Noto Sans CJK SC',monospace;transform:scaleX(0.9750);">zhangjl20</span>
<svg class="b" style="left:481.95px;top:789.9px;" width="17" height="21" viewBox="0 0 17 21"><path d="M4.300 4.100H3.200A1.500 1.500 0 0 0 1.700 5.600v10a1.500 1.500 0 0 0 1.500 1.500H5.300" fill="none" stroke="#55545b" stroke-width="1.900"/><path d="M10.300 4.100h.800a1.500 1.500 0 0 1 1.500 1.500v3.700" fill="none" stroke="#55545b" stroke-width="1.900"/><path d="M4.800 5.300V3.600a1 1 0 0 1 1-1h.400a1.200 1.200 0 0 1 2.300 0h.400a1 1 0 0 1 1 1v1.700z" fill="none" stroke="#55545b" stroke-width="1.700" stroke-linejoin="round"/><path d="M7.200 14.200V11.400H10M12.700 11.400h2.800v2.800M15.500 16.700v2.800h-2.800M10 19.500H7.200v-2.800" fill="none" stroke="#55545b" stroke-width="1.900" stroke-linejoin="round"/></svg>
<div class="b" style="left:510.25px;top:790.75px;width:72.3px;height:20px;background:#cbe2f9;border-radius:10px;"></div>
<span class="t" style="left:519.22px;top:790.10px;font-size:15px;color:#0b5cad;transform:scaleX(1.0299);">merged</span>
<svg class="b" style="left:360.5px;top:823px;" width="18" height="16" viewBox="0 0 18 16"><circle cx="9.200" cy="8.500" r="2.600" fill="none" stroke="#737278" stroke-width="2"/><path d="M1.500 8.500h5M11.900 8.500h5" stroke="#737278" stroke-width="2" stroke-linecap="round"/></svg>
<span class="t" style="left:383.53px;top:819.50px;font-size:17.4px;color:#1068bf;font-family:'Liberation Mono','Noto Sans CJK SC',monospace;transform:scaleX(0.9685);">be42a5fd</span>
<span class="t" style="left:467.30px;top:818.00px;font-size:17.5px;color:#626168;">·</span>
<span class="t" style="left:478.20px;top:818.00px;font-size:17.5px;color:#333238;transform:scaleX(0.9833);">zhangjl20提交的</span>
<span class="t" style="left:607.00px;top:818.00px;font-size:17.5px;color:#626168;">·</span>
<span class="t" style="left:617.20px;top:818.00px;font-size:17.5px;color:#737278;transform:scaleX(0.9837);">3 days ago</span>
<div class="b" style="left:1738px;top:795px;width:69.75px;height:40px;background:#fff;border:1px solid #b0afb5;border-radius:5px;"></div>
<svg class="b" style="left:1752px;top:804px;" width="22" height="22" viewBox="0 0 22 22"><path d="M10.900 3.100v11.600M6.400 10l4.500 4.700 4.600-4.700M3.300 13.300v3.700a1.500 1.500 0 0 0 1.500 1.500h12.300a1.500 1.500 0 0 0 1.500-1.500v-3.700" fill="none" stroke="#626168" stroke-width="1.900" stroke-linecap="round" stroke-linejoin="round"/></svg>
<svg class="b" style="left:1782.1px;top:811.6px;" width="12.3" height="8" viewBox="0 0 12.3 8"><path d="M1.700 1.700L6.150 6l4.450-4.300" fill="none" stroke="#626168" stroke-width="1.7" stroke-linecap="round" stroke-linejoin="round"/></svg>
<div class="b" style="left:1818.2px;top:794px;width:39.4px;height:41px;background:#fff;border:1px solid #b0afb5;border-radius:5px;"></div>
<svg class="b" style="left:1827.7px;top:804px;" width="21" height="22" viewBox="0 0 21 22"><path d="M1.400 5.300h17.300M5.800 5V2.400a1 1 0 0 1 1-1h6.500a1 1 0 0 1 1 1V5M3.400 5.600l1.300 13.300a1.500 1.500 0 0 0 1.500 1.300h7.700a1.500 1.500 0 0 0 1.500-1.300l1.300-13.300" fill="none" stroke="#626168" stroke-width="1.900" stroke-linecap="round" stroke-linejoin="round"/></svg>
<div class="b" style="left:1474px;top:795px;width:142.7px;height:40px;background:#fff;border:1px solid #b0afb5;border-radius:5px;"></div>
<span class="t" style="left:1488.75px;top:803.80px;font-size:17.5px;color:#333238;transform:scaleX(1.0025);">Merge request</span>
<div class="b" style="left:1627px;top:795px;width:101px;height:40px;background:#fff;border:1px solid #b0afb5;border-radius:5px;"></div>
<span class="t" style="left:1642.25px;top:803.80px;font-size:17.5px;color:#333238;transform:scaleX(0.9826);">Compare</span>
<span class="t" style="left:1350.70px;top:808.30px;font-size:15px;color:#333238;transform:scaleX(0.8125);">4</span>
<span class="t" style="left:1364.80px;top:808.30px;font-size:15px;color:#333238;transform:scaleX(0.9125);">0</span>
<div class="b" style="left:1363px;top:804.4px;width:1px;height:21.5px;background:#dcdcde;"></div>
<div class="b" style="left:1360px;top:804px;width:4px;height:4.5px;background:#dcdcde;border-radius:1px;"></div>
</main>
<div class="ime-toolbar">
<div class="b" style="left:1786.7px;top:452.2px;width:140px;height:28.2px;border:1px solid #c6c6c6;border-radius:3px;background:linear-gradient(180deg,#fefefe,#eeeeee);box-shadow:0 0 1.5px rgba(0,0,0,.3);"></div>
<svg class="b" style="left:1794.5px;top:457.5px;fill:#ec5b3c;" width="16" height="16" viewBox="0 0 16 16"><ellipse cx="2.300" cy="6.300" rx="1.700" ry="2.100"/><ellipse cx="5.900" cy="2.600" rx="1.700" ry="2.100"/><ellipse cx="10.300" cy="2.600" rx="1.700" ry="2.100"/><ellipse cx="13.900" cy="6.300" rx="1.700" ry="2.100"/><path d="M8.100 5.800c2.400 0 3.300 2.100 5.100 4.100 1.900 2.100 1.400 5.100-1.100 5.400-1.600.200-2.400-.600-4-.600s-2.400.800-4 .600C1.600 15 1.100 12 3 9.900 4.800 7.900 5.700 5.800 8.100 5.800z"/></svg>
<span class="t" style="left:1821.00px;top:454.30px;font-size:14.5px;color:#5e5c5a;font-weight:700;z-index:3;transform:scaleX(0.9333);">英</span>
<svg class="b" style="left:1846px;top:459px;" width="14" height="15" viewBox="0 0 14 15"><path d="M8.700 0.500c3 1.200 4.900 4 4.600 7.300-.400 3.900-3.700 6.600-7.600 6.400C3.600 14.100 1.800 13.200.600 11.800c3.600.300 6.800-1.500 8-4.600C9.400 5 9.300 2.600 8.700.500z" fill="#5e5c5a"/></svg>
<svg class="b" style="left:1872px;top:459px;" width="15" height="15" viewBox="0 0 15 15"><circle cx="4" cy="3.800" r="2.600" fill="#5e5c5a"/><path d="M10 6.200h3.600v3.200c0 2.400-1.300 4.200-3.600 4.900v-1.500c1-.500 1.600-1.300 1.700-2.400H10z" fill="#5e5c5a"/></svg>
<svg class="b" style="left:1898px;top:458px;" width="15" height="15" viewBox="0 0 15 15"><path fill-rule="evenodd" d="M5.95 2.12 L5.94 0.16 L9.06 0.16 L9.05 2.12 L10.21 2.60 L11.58 1.21 L13.79 3.42 L12.40 4.79 L12.88 5.95 L14.84 5.94 L14.84 9.06 L12.88 9.05 L12.40 10.21 L13.79 11.58 L11.58 13.79 L10.21 12.40 L9.05 12.88 L9.06 14.84 L5.94 14.84 L5.95 12.88 L4.79 12.40 L3.42 13.79 L1.21 11.58 L2.60 10.21 L2.12 9.05 L0.16 9.06 L0.16 5.94 L2.12 5.95 L2.60 4.79 L1.21 3.42 L3.42 1.21 L4.79 2.60ZM10.30 7.50A2.800 2.800 0 1 0 4.70 7.50A2.800 2.800 0 1 0 10.30 7.50Z" fill="#5e5c5a"/></svg>
</div>
</body></html>
